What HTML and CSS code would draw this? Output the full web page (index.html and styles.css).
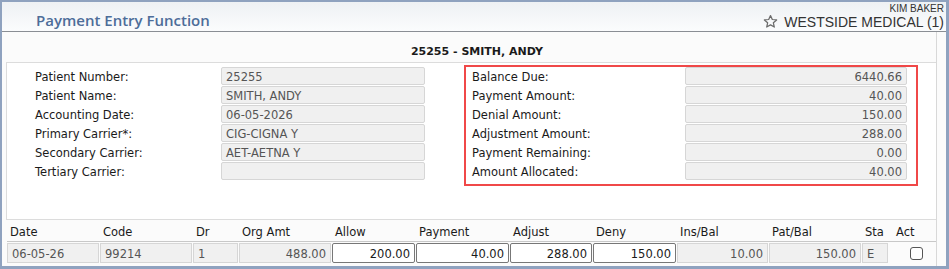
FILE: index.html
```html
<!DOCTYPE html>
<html lang="en">

<head>
    <meta charset="UTF-8">
    <title>Payment Entry Function</title>
    <link rel="stylesheet" href="styles.css">
</head>

<body>
    <div class="frame">
        <div class="topBar">
            <h1 class="pageTitle">Payment Entry Function</h1>
            <div class="userBox">
                <div class="userName">KIM BAKER</div>
                <div class="practice">
                    <svg class="star" width="15" height="15" viewBox="0 0 24 24">
                        <path d="M12 2.5l2.9 6.3 6.9.7-5.2 4.6 1.5 6.8L12 17.4l-6.1 3.5 1.5-6.8-5.2-4.6 6.9-.7z"
                            fill="none" stroke="#6b6b6b" stroke-width="2" stroke-linejoin="round" />
                    </svg>
                    <span>WESTSIDE MEDICAL (1)</span>
                </div>
            </div>
        </div>

        <div class="panel">
            <div class="patientHead">25255 - SMITH, ANDY</div>

            <div class="formBox">
                <div class="leftCol">
                    <div class="field"><label>Patient Number:</label><div class="box">25255</div></div>
                    <div class="field"><label>Patient Name:</label><div class="box">SMITH, ANDY</div></div>
                    <div class="field"><label>Accounting Date:</label><div class="box">06-05-2026</div></div>
                    <div class="field"><label>Primary Carrier*:</label><div class="box">CIG-CIGNA Y</div></div>
                    <div class="field"><label>Secondary Carrier:</label><div class="box">AET-AETNA Y</div></div>
                    <div class="field"><label>Tertiary Carrier:</label><div class="box"></div></div>
                </div>

                <div class="totals">
                    <div class="field"><label>Balance Due:</label><div class="box num">6440.66</div></div>
                    <div class="field"><label>Payment Amount:</label><div class="box num">40.00</div></div>
                    <div class="field"><label>Denial Amount:</label><div class="box num">150.00</div></div>
                    <div class="field"><label>Adjustment Amount:</label><div class="box num">288.00</div></div>
                    <div class="field"><label>Payment Remaining:</label><div class="box num">0.00</div></div>
                    <div class="field"><label>Amount Allocated:</label><div class="box num">40.00</div></div>
                </div>
            </div>

            <div class="lineGrid gridHead">
                <div>Date</div>
                <div>Code</div>
                <div>Dr</div>
                <div>Org Amt</div>
                <div>Allow</div>
                <div>Payment</div>
                <div>Adjust</div>
                <div>Deny</div>
                <div>Ins/Bal</div>
                <div>Pat/Bal</div>
                <div>Sta</div>
                <div class="actHead">Act</div>
            </div>

            <div class="lineGrid gridRow">
                <div class="cell">06-05-26</div>
                <div class="cell">99214</div>
                <div class="cell">1</div>
                <div class="cell num">488.00</div>
                <div class="cell edit num">200.00</div>
                <div class="cell edit num">40.00</div>
                <div class="cell edit num">288.00</div>
                <div class="cell edit num">150.00</div>
                <div class="cell num">10.00</div>
                <div class="cell num">150.00</div>
                <div class="cell">E</div>
                <div class="actCell"><span class="check"></span></div>
            </div>
        </div>
    </div>
</body>

</html>
```

FILE: styles.css
```css
* {
    margin: 0px;
    padding: 0px;
    box-sizing: border-box;
}

body {
    font-family: "DejaVu Sans", Verdana, sans-serif;
    font-size: 11.5px;
    color: #1a1a1a;
    background-color: #fbfbfb;
}

.frame {
    width: 949px;
    height: 269px;
    border-style: solid;
    border-color: #8fa2bf;
    border-width: 2px 3px 3px 2px;
    display: flex;
    flex-direction: column;
    background-color: #fbfbfb;
}

.topBar {
    height: 30px;
    flex-shrink: 0;
    display: flex;
    justify-content: space-between;
    border-bottom: 1px solid #8a8e94;
    background: linear-gradient(#eef1f4, #fbfcfd);
}

.pageTitle {
    font-family: "Open Sans", sans-serif;
    font-weight: 600;
    font-size: 15px;
    color: #4d6d99;
    padding: 8px 0 0 34px;
}

.userBox {
    display: flex;
    flex-direction: column;
    align-items: flex-end;
    padding-right: 2px;
    font-family: "Liberation Sans", Arial, sans-serif;
}

.userName {
    font-size: 10px;
    color: #333;
    line-height: 11px;
    padding-top: 1px;
}

.practice {
    display: flex;
    align-items: center;
    gap: 6px;
    font-size: 14px;
    color: #333;
    line-height: 16px;
}

.star {
    margin-top: -1px;
}

.panel {
    width: 935px;
    flex: 1;
    border-right: 1px solid #d8d8d8;
    display: flex;
    flex-direction: column;
}

.patientHead {
    height: 30px;
    flex-shrink: 0;
    text-align: center;
    font-weight: bold;
    font-size: 11px;
    padding-top: 13px;
    padding-left: 16px;
}

.formBox {
    height: 158px;
    flex-shrink: 0;
    margin-left: 4px;
    border: 1px solid #dcdcdc;
    border-right: none;
    background-color: #fff;
    display: flex;
    padding-top: 2px;
}

.leftCol {
    width: 457px;
    padding: 2px 0 0 28px;
}

.field {
    display: flex;
    align-items: center;
    height: 18px;
    margin-bottom: 1px;
}

.field label {
    padding-top: 1px;
}

.leftCol label {
    width: 186px;
}

.box {
    height: 18px;
    width: 204px;
    background-color: #f0f0f0;
    border: 1px solid #d6d6d6;
    border-radius: 2px;
    color: #555;
    padding: 2px 4px 0 4px;
    line-height: 14px;
}

.num {
    text-align: right;
}

.totals {
    width: 454px;
    height: 121px;
    border: 2px solid #f04848;
    padding: 0 9px 0 6px;
}

.totals label {
    width: 213px;
}

.totals .box {
    width: 222px;
}

.lineGrid {
    display: grid;
    grid-template-columns: 93px 93px 46px 93px 84px 94px 83px 84px 92px 93px 27px 1fr;
    margin-left: 5px;
}

.gridHead {
    height: 22px;
    flex-shrink: 0;
    border-bottom: 1px solid #c8c8c8;
    align-items: center;
    padding-top: 2px;
}

.gridHead div {
    padding-left: 3px;
}

.gridHead .actHead {
    padding-left: 7px;
}

.gridRow {
    padding-top: 1px;
}

.cell {
    height: 20px;
    margin-right: 1px;
    background-color: #f0f0f0;
    border: 1px solid #d6d6d6;
    color: #555;
    padding: 3px 4px 0 4px;
    line-height: 14px;
}

.cell.edit {
    background-color: #fff;
    border-color: #777;
    border-radius: 2px;
    color: #1a1a1a;
}

.actCell {
    display: flex;
    align-items: center;
    height: 20px;
    padding-left: 21px;
}

.check {
    width: 13px;
    height: 13px;
    border: 1px solid #555;
    border-radius: 3px;
    background-color: #fff;
}
```
